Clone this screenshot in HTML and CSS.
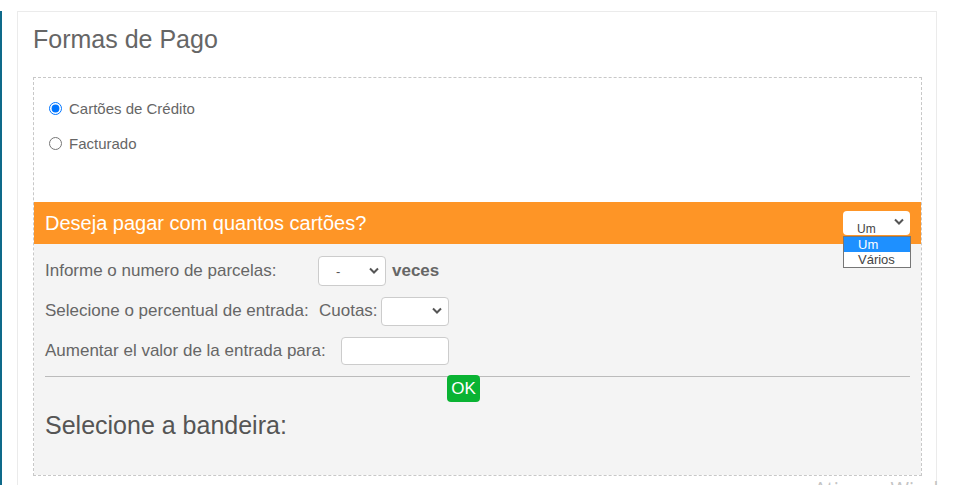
FILE: index.html
```html
<!DOCTYPE html>
<html lang="pt">
<head>
<meta charset="utf-8">
<title>Formas de Pago</title>
<link rel="stylesheet" href="styles.css">
</head>
<body>
<div class="page">
  <div class="card">
    <h2 class="title">Formas de Pago</h2>
    <div class="box">
      <div class="methods">
        <label class="radio"><input type="radio" name="pay" checked><span>Cartões de Crédito</span></label>
        <label class="radio"><input type="radio" name="pay"><span>Facturado</span></label>
      </div>
      <div class="bar">
        <span class="bar-text">Deseja pagar com quantos cartões?</span>
        <div class="sel sel-bar">
          <span class="sel-val">Um</span>
          <svg class="chev" width="10" height="7" viewBox="0 0 10 7"><path d="M1 1.5 L5 5.5 L9 1.5" fill="none" stroke="#555" stroke-width="2"/></svg>
          <ul class="options">
            <li class="opt active">Um</li>
            <li class="opt">Vários</li>
          </ul>
        </div>
      </div>
      <div class="panel">
        <div class="row">
          <span class="lbl lbl-1">Informe o numero de parcelas:</span>
          <div class="sel sel-sm"><span class="sel-dash">-</span><svg class="chev" width="10" height="7" viewBox="0 0 10 7"><path d="M1 1.5 L5 5.5 L9 1.5" fill="none" stroke="#555" stroke-width="2"/></svg></div>
          <b class="veces">veces</b>
        </div>
        <div class="row">
          <span class="lbl lbl-2">Selecione o percentual de entrada:</span>
          <span class="lbl lbl-c">Cuotas:</span>
          <div class="sel sel-sm sel-cuotas"><svg class="chev" width="10" height="7" viewBox="0 0 10 7"><path d="M1 1.5 L5 5.5 L9 1.5" fill="none" stroke="#555" stroke-width="2"/></svg></div>
        </div>
        <div class="row">
          <span class="lbl lbl-3">Aumentar el valor de la entrada para:</span>
          <input class="txt" type="text">
        </div>
        <hr class="rule">
        <div class="ok-row"><button class="ok">OK</button></div>
        <h3 class="flag">Selecione a bandeira:</h3>
      </div>
    </div>
  </div>
  <div class="watermark">Ativar o Windows</div>
</div>
</body>
</html>
```
FILE: styles.css
```css
html, body { margin: 0; padding: 0; overflow: hidden; height: 100%; background: #fff; }
body { font-family: "Liberation Sans", Arial, sans-serif; color: #666; }
.page { position: relative; height: 100%; border-left: 2px solid #0e6a8a; box-sizing: border-box; }
.card {
  margin-left: 15px; margin-top: 11px; width: 920px; box-sizing: border-box;
  border: 1px solid #ebebeb; border-bottom: none; height: 600px;
  padding: 0 14px 0 15px;
}
.title { margin: 0; padding-top: 13px; font-size: 25px; font-weight: normal; line-height: 29px; color: #666; box-sizing: border-box; height: 65px; }
.box { border: 1px dashed #c8c8c8; height: 399px; box-sizing: border-box; }
.methods { padding: 22px 15px 0 15px; height: 124px; box-sizing: border-box; display: flex; flex-direction: column; gap: 18px; }
.radio { display: flex; align-items: center; gap: 7px; font-size: 15px; line-height: 17px; color: #666; }
.radio input { margin: 0; width: 13px; height: 13px; accent-color: #0075ff; }
.bar { position: relative; height: 42px; background: #fe9526; display: flex; align-items: center; justify-content: space-between; padding: 0 11px 0 11px; }
.bar-text { color: #fff; font-size: 20px; line-height: 24px; }
.sel { position: relative; background: #fff; border-radius: 4px; box-sizing: border-box; display: flex; align-items: center; }
.sel-bar { width: 67px; height: 24px; overflow: visible; }
.sel-val { font-size: 12px; color: #444; margin-left: 14px; padding-top: 9px; height: 13px; overflow: hidden; line-height: 16px; }
.chev { position: absolute; right: 6px; top: 50%; margin-top: -4px; }
.sel-bar .chev { top: 7px; margin-top: 0; }
.options {
  position: absolute; left: 0; top: 25px; width: 68px; margin: 0; padding: 0; list-style: none;
  background: #fff; border: 1px solid #767676; box-sizing: border-box; z-index: 2;
}
.opt { font-size: 13px; line-height: 15px; padding-left: 14px; color: #444; }
.opt.active { background: #1e90ff; color: #fff; }
.panel { background: #f4f4f4; height: 231px; padding: 12px 11px 0 11px; box-sizing: border-box; }
.row { display: flex; align-items: center; height: 30px; margin-bottom: 10px; font-size: 17px; }
.lbl { color: #666; white-space: nowrap; }
.lbl-1 { width: 273px; }
.lbl-2 { width: 274px; }
.lbl-c { width: 62px; }
.lbl-3 { width: 296px; }
.sel-sm { width: 68px; height: 30px; border: 1px solid #ccc; }
.sel-cuotas { height: 29px; }
.sel-dash { margin-left: 17px; font-size: 13px; color: #555; }
.veces { margin-left: 6px; font-weight: bold; color: #666; }
.txt { width: 108px; height: 28px; box-sizing: border-box; border: 1px solid #ccc; border-radius: 4px; background: #fff; margin: 0; padding: 0 6px; }
.rule { margin: 0; border: none; border-top: 1px solid #bbb; height: 0; }
.ok-row { padding-left: 402px; margin-top: -2px; }
.ok { width: 33px; height: 27px; border: none; border-radius: 4px; background: #0ab333; color: #fff; font-family: "Liberation Sans", Arial, sans-serif; font-size: 17px; padding: 0; }
.flag { margin: 8px 0 0 0; font-size: 25px; font-weight: normal; color: #555; line-height: 30px; }
.watermark { position: absolute; left: 812px; top: 466px; font-family: "Open Sans", "DejaVu Sans", sans-serif; font-size: 20px; line-height: 24px; color: #c4c4c4; white-space: nowrap; }
```
